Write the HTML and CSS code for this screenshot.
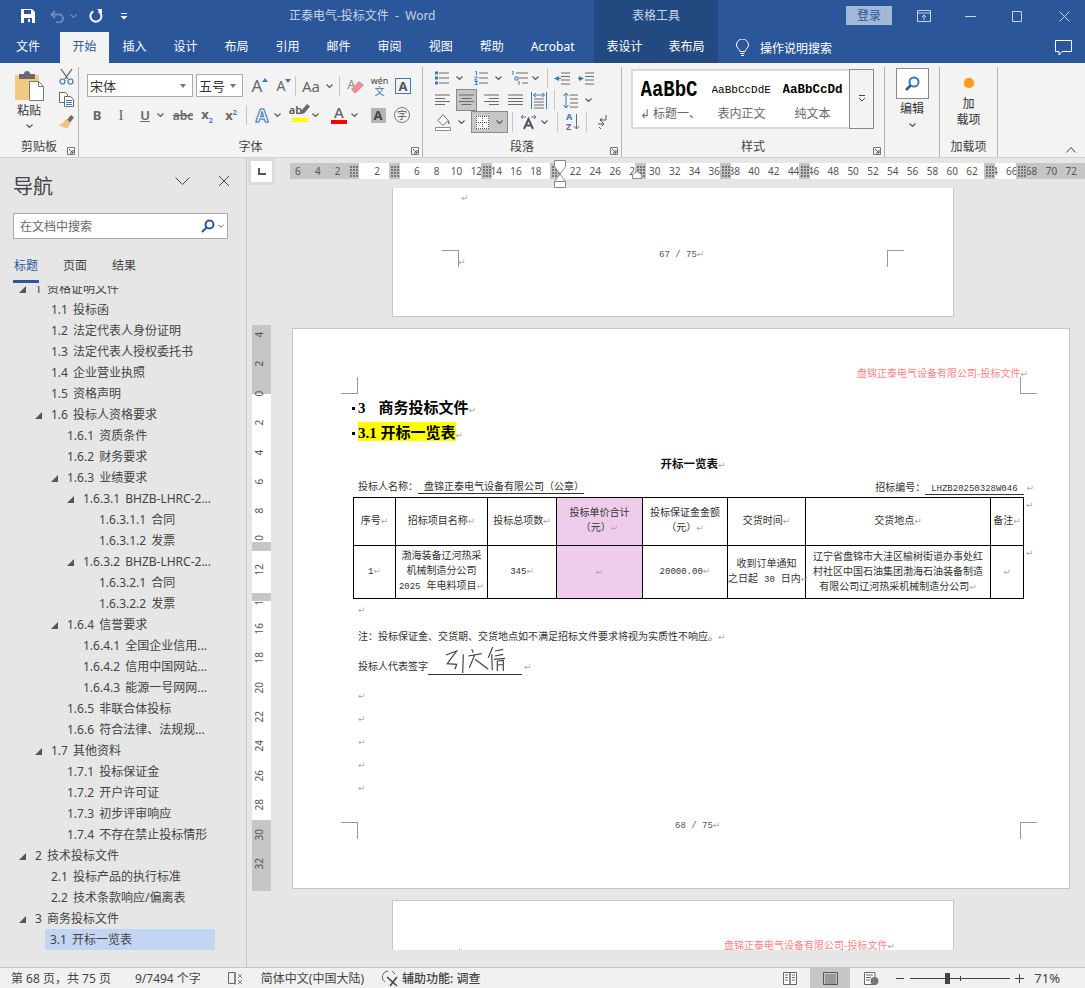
FILE: index.html
```html
<!DOCTYPE html>
<html lang="zh-CN">
<head>
 <meta charset="UTF-8">
 <title>正泰电气-投标文件 - Word</title>
 <link rel="stylesheet" href="styles.css">
</head>
<body>
 <svg class="defs" width="0" height="0">
  <symbol id="chev" viewBox="0 0 7 4"><path d="M.5.5 3.5 3.5 6.5.5" fill="none" stroke="currentColor" stroke-width="1.1"/></symbol>
  <symbol id="launch" viewBox="0 0 8 8"><path d="M.5 7.5V.5h7v7z" fill="none" stroke="#777"/><path d="M2 2l4 4M6 3v3H3" fill="none" stroke="#555"/></symbol>
  <symbol id="left" viewBox="0 0 15 12"><path d="M0 1h15M0 4.500h10M0 7.500h15M0 10.500h10" stroke="#6a6a6a"/></symbol>
  <symbol id="centerl" viewBox="0 0 15 12"><path d="M0 1h15M2.500 4.500h10M0 7.500h15M2.500 10.500h10" stroke="#6a6a6a"/></symbol>
  <symbol id="right" viewBox="0 0 15 12"><path d="M0 1h15M5 4.500h10M0 7.500h15M5 10.500h10" stroke="#6a6a6a"/></symbol>
  <symbol id="just" viewBox="0 0 15 12"><path d="M0 1h15M0 4.500h15M0 7.500h15M0 10.500h15" stroke="#6a6a6a"/></symbol>
 </svg>

 <header class="titlebar">
  <div class="qat">
   <svg class="q-save" width="14" height="14" viewBox="0 0 14 14"><path d="M0 0h11l3 3v11H0z" fill="#fff"/><path d="M3 1h7v4H3z" fill="#2b579a"/><path d="M3 9h8v5H3z" fill="#2b579a"/><path d="M7 10h2v3H7z" fill="#fff"/></svg>
   <svg class="q-undo" width="15" height="13" viewBox="0 0 15 13"><path d="M5 1 1.500 4.500 5 8" fill="none" stroke="#6d8cbc" stroke-width="2"/><path d="M2 4.500h7a4 4 0 0 1 0 8H6" fill="none" stroke="#6d8cbc" stroke-width="2"/></svg>
   <svg class="q-chev" width="7" height="4"><use href="#chev"/></svg>
   <svg class="q-redo" width="14" height="14" viewBox="0 0 14 14"><path d="M9.500 2.400a5.500 5.500 0 1 1-5.200 0" fill="none" stroke="#fff" stroke-width="2"/><path d="M8 0h5v5z" fill="#fff"/></svg>
   <svg class="q-more" width="8" height="7" viewBox="0 0 8 7"><path d="M1 .5h6" stroke="#fff"/><path d="M.5 3h7L4 6.500z" fill="#fff"/></svg>
  </div>
  <div class="doc-title">正泰电气-投标文件&nbsp;&nbsp;-&nbsp;&nbsp;Word</div>
  <div class="ctx-title">表格工具</div>
  <div class="win">
   <span class="login">登录</span>
   <svg class="w-opt" width="14" height="12" viewBox="0 0 14 12"><path d="M.5.5h13v11H.5zM.5 3h13M7 10V5M5 7l2-2 2 2" fill="none" stroke="#c9d5e8"/></svg>
   <svg class="w-min" width="11" height="11" viewBox="0 0 11 11"><path d="M0 5.500h11" stroke="#c9d5e8"/></svg>
   <svg class="w-max" width="10" height="11" viewBox="0 0 10 11"><path d="M.5.500h9v10h-9z" fill="none" stroke="#c9d5e8"/></svg>
   <svg class="w-close" width="11" height="11" viewBox="0 0 11 11"><path d="M.5.500l10 10M10.500.500l-10 10" stroke="#c9d5e8"/></svg>
  </div>
 </header>

 <nav class="tabs">
  <span class="tab tab-file">文件</span>
  <span class="tab tab-on">开始</span>
  <span class="tab">插入</span>
  <span class="tab">设计</span>
  <span class="tab">布局</span>
  <span class="tab">引用</span>
  <span class="tab">邮件</span>
  <span class="tab">审阅</span>
  <span class="tab">视图</span>
  <span class="tab">帮助</span>
  <span class="tab">Acrobat</span>
  <div class="ctx-tabs">
   <span class="tab tab-ctx">表设计</span>
   <span class="tab tab-ctx">表布局</span>
  </div>
  <svg class="bulb" width="13" height="18" viewBox="0 0 13 18"><path d="M4 12.500C3.500 10 .5 9 .5 6a6 6 0 0 1 12 0c0 3-3 4-3.500 6.500z" fill="none" stroke="#fff"/><path d="M4.500 14.500h4M5 16.500h3" stroke="#fff"/></svg>
  <span class="tell">操作说明搜索</span>
  <svg class="comment" width="17" height="16" viewBox="0 0 17 16"><path d="M.5.500h16v11H7l-3 3.500v-3.500H.5z" fill="none" stroke="#fff"/></svg>
 </nav>

 <section class="ribbon">
  <div class="group g-clip">
   <div class="clip-body">
    <div class="paste">
     <svg width="29" height="31" viewBox="0 0 29 31"><path d="M0 5h24v25H0z" fill="#f1c97f"/><path d="M4 4h5a3 3 0 0 1 6 0h5v5H4z" fill="#6a6a6a"/><path d="M14.500 11.500h9l5 5v14h-14z" fill="#fff" stroke="#777"/><path d="M23.500 11.500v5h5" fill="none" stroke="#777"/></svg>
     <span>粘贴</span>
     <svg class="chev" width="7" height="4"><use href="#chev"/></svg>
    </div>
    <div class="clip-small">
     <svg width="15" height="16" viewBox="0 0 15 16"><path d="M2 0l7 10M13 0 6 10" stroke="#666" stroke-width="1.300"/><circle cx="3.500" cy="12.500" r="2.500" fill="none" stroke="#3f78b8" stroke-width="1.200"/><circle cx="11.500" cy="12.500" r="2.500" fill="none" stroke="#3f78b8" stroke-width="1.200"/></svg>
     <svg width="15" height="15" viewBox="0 0 15 15"><path d="M.5.500h6l2 2v8h-8z" fill="#fff" stroke="#6a6a6a"/><path d="M5.500 4.500h6l3 3v7h-9z" fill="#fff" stroke="#6a6a6a"/><path d="M7 8.500h6M7 10.500h6M7 12.500h6" stroke="#3f78b8"/></svg>
     <svg width="17" height="15" viewBox="0 0 17 15"><path d="M9 6 13 1l3 2.500-4 5z" fill="#6a6a6a"/><path d="M8 5l5 4-4 5.500L0 11c3 0 5-2 8-6z" fill="#f0c380"/></svg>
    </div>
   </div>
   <div class="g-label">剪贴板<svg class="launch" width="8" height="8"><use href="#launch"/></svg></div>
  </div>

  <div class="group g-font">
   <div class="f-row f-top">
    <div class="select s-font"><span>宋体</span><i class="drop"></i></div>
    <div class="select s-size"><span>五号</span><i class="drop"></i></div>
    <span class="ib"><b class="glyph lg">A</b><i class="tri up"></i></span>
    <span class="ib"><b class="glyph md">A</b><i class="tri dn"></i></span>
    <i class="sep"></i>
    <span class="ib w39"><b class="glyph aa">Aa</b><svg class="chev" width="7" height="4"><use href="#chev"/></svg></span>
    <i class="sep"></i>
    <span class="ib ml2 eraser"><b class="glyph er">A</b><svg width="14" height="12" viewBox="0 0 14 12"><path d="M0 8 8 0l5 4-8 8H3z" fill="#ec8d9b"/></svg></span>
    <span class="ib wen"><small>wén</small><em>文</em></span>
    <span class="ib"><b class="glyph abox">A</b></span>
   </div>
   <div class="f-row f-btm">
    <span class="ib"><b class="glyph bd">B</b></span>
    <span class="ib"><i class="glyph it">I</i></span>
    <span class="ib"><u class="glyph un">U</u></span>
    <svg class="chev c-u" width="7" height="4"><use href="#chev"/></svg>
    <span class="ib"><s class="glyph st">abc</s></span>
    <span class="ib"><b class="glyph xs">x<sub>2</sub></b></span>
    <span class="ib"><b class="glyph xs">x<sup>2</sup></b></span>
    <i class="sep"></i>
    <span class="ib"><b class="glyph fx">A</b></span>
    <svg class="chev" width="7" height="4"><use href="#chev"/></svg>
    <span class="ib ml7 bar-ic"><span class="ab">ab<svg width="12" height="12" viewBox="0 0 12 12"><path d="M1 10l1-3 6-7 3 2.500-6 7z" fill="#6a6a6a"/></svg></span><i class="bar yel"></i></span>
    <svg class="chev" width="7" height="4"><use href="#chev"/></svg>
    <span class="ib ml8 bar-ic"><b class="glyph ac">A</b><i class="bar red"></i></span>
    <svg class="chev" width="7" height="4"><use href="#chev"/></svg>
    <span class="ib ml8"><b class="glyph shade">A</b></span>
    <span class="ib"><span class="circle">字</span></span>
   </div>
   <div class="g-label">字体<svg class="launch" width="8" height="8"><use href="#launch"/></svg></div>
  </div>

  <div class="group g-para">
   <div class="p-row">
    <svg class="li" width="14" height="14" viewBox="0 0 14 14"><path d="M4 2h10M4 7h10M4 12h10" stroke="#6a6a6a"/><path d="M0 .500h3v3H0zM0 5.500h3v3H0zM0 10.500h3v3H0z" fill="#3f78b8"/></svg>
    <svg class="chev" width="7" height="4"><use href="#chev"/></svg>
    <svg class="li ml11" width="14" height="14" viewBox="0 0 14 14"><path d="M5 2h9M5 7h9M5 12h9" stroke="#6a6a6a"/><path d="M1 0h1.500v4M.5 6h3L.5 9h3M.5 10.500h3l-1.500 1 1.500 2h-3" fill="none" stroke="#3f78b8"/></svg>
    <svg class="chev" width="7" height="4"><use href="#chev"/></svg>
    <svg class="li ml9" width="17" height="14" viewBox="0 0 17 14"><path d="M5 2h12M8 7h9M11 12h6" stroke="#6a6a6a"/><path d="M1 0h1v4M4 6h3v3H4zM8 10v4" fill="none" stroke="#3f78b8"/></svg>
    <svg class="chev c-tight" width="7" height="4"><use href="#chev"/></svg>
    <i class="sep ml8"></i>
    <svg class="li ml6" width="16" height="13" viewBox="0 0 16 13"><path d="M7 1h9M7 4.500h9M7 8h9M7 12h9" stroke="#6a6a6a"/><path d="M5 4v5L0 6.500z" fill="#3f78b8"/><path d="M3 6.500h4" stroke="#3f78b8"/></svg>
    <svg class="li ml8" width="16" height="13" viewBox="0 0 16 13"><path d="M7 1h9M7 4.500h9M7 8h9M7 12h9" stroke="#6a6a6a"/><path d="M1 4v5l5-2.500z" fill="#3f78b8"/><path d="M0 6.500h3" stroke="#3f78b8"/></svg>
   </div>
   <div class="p-row">
    <svg class="li" width="15" height="12"><use href="#left"/></svg>
    <span class="on on-c ml6"><svg width="15" height="12"><use href="#centerl"/></svg></span>
    <svg class="li ml7" width="15" height="12"><use href="#right"/></svg>
    <svg class="li ml9" width="15" height="12"><use href="#just"/></svg>
    <svg class="li ml8" width="16" height="17" viewBox="0 0 16 17"><path d="M.5 0v17M15.500 0v17" stroke="#3f78b8"/><path d="M3 7h10M3 10h10M3 13h10M3 16h10" stroke="#6a6a6a"/><path d="M2.500 3h11M5 1 2.500 3 5 5M11 1l2.500 2L11 5" fill="none" stroke="#3f78b8"/></svg>
    <i class="sep ml7"></i>
    <svg class="li ml8" width="15" height="17" viewBox="0 0 15 17"><path d="M7 3h8M7 7h8M7 11h8M7 15h8" stroke="#6a6a6a"/><path d="M3 1v15M.5 4 3 1l2.500 3M.5 13 3 16l2.500-3" fill="none" stroke="#3f78b8"/></svg>
    <svg class="chev" width="7" height="4"><use href="#chev"/></svg>
   </div>
   <div class="p-row">
    <svg class="li" width="16" height="17" viewBox="0 0 16 17"><path d="M8 .500l5 6-5 5-5-5z" fill="#fff" stroke="#6a6a6a"/><path d="M13 6c2 2 2 4 1 4s-1.500-2-1-4z" fill="#3f78b8"/><path d="M.5 13.500h15v3H.5z" fill="#fff" stroke="#8a8a8a"/></svg>
    <svg class="chev" width="7" height="4"><use href="#chev"/></svg>
    <span class="on on-b ml6"><svg width="13" height="13" viewBox="0 0 13 13"><path d="M0 0h13v13H0z" fill="#fff"/><path d="M.5 0v13M6.500 0v13M12.500 0v13M0 .500h13M0 6.500h13M0 12.500h13" stroke="#555" stroke-dasharray="1 1"/></svg><svg class="chev" width="7" height="4"><use href="#chev"/></svg></span>
    <i class="sep ml4"></i>
    <svg class="li ml7" width="17" height="15" viewBox="0 0 17 15"><path d="M4 14 8.500 4 13 14M6 10.500h5" fill="none" stroke="#555" stroke-width="2"/><path d="M6 2H1M3 0 1 2l2 2M11 2h5M14 0l2 2-2 2" fill="none" stroke="#3f78b8"/></svg>
    <svg class="chev c-tight" width="7" height="4"><use href="#chev"/></svg>
    <i class="sep ml9"></i>
    <span class="sort ml8"><b>A</b><b>Z</b></span>
    <svg class="sort-arrow" width="7" height="16" viewBox="0 0 7 16"><path d="M3.500 0v15M.5 12l3 3 3-3" fill="none" stroke="#6a6a6a"/></svg>
    <i class="sep ml6"></i>
    <svg class="li ml10" width="10" height="14" viewBox="0 0 10 14"><path d="M9 0v5H3M5 3 3 5l2 2" fill="none" stroke="#555"/><path d="M1 9h6M5 7l2 2-2 2M2 12l2 2" fill="none" stroke="#555"/></svg>
   </div>
   <div class="g-label">段落<svg class="launch" width="8" height="8"><use href="#launch"/></svg></div>
  </div>

  <div class="group g-style">
   <div class="gallery">
    <div class="samples">
     <div class="sample s1"><b>AaBbC</b><span>↲ 标题一、</span></div>
     <div class="sample s2"><b>AaBbCcDdE</b><span>表内正文</span></div>
     <div class="sample s3"><b>AaBbCcDdE</b><span>纯文本</span></div>
    </div>
    <div class="g-more"><svg width="8" height="8" viewBox="0 0 8 8"><path d="M1 .5h6" stroke="#444"/><path d="M1 3l3 3 3-3" fill="none" stroke="#444"/></svg></div>
   </div>
   <div class="g-label">样式<svg class="launch" width="8" height="8"><use href="#launch"/></svg></div>
  </div>

  <div class="group g-edit">
   <div class="find"><svg width="18" height="18" viewBox="0 0 18 18"><circle cx="11" cy="7" r="4.500" fill="none" stroke="#3f78b8" stroke-width="2"/><path d="M7.500 10.500 3 15" stroke="#2b579a" stroke-width="2.500"/></svg></div>
   <span>编辑</span>
   <svg class="chev" width="7" height="4"><use href="#chev"/></svg>
  </div>

  <div class="group g-addin">
   <i class="dot"></i>
   <span class="add-text">加<br>载项</span>
   <div class="g-label">加载项</div>
  </div>

  <svg class="collapse" width="10" height="6" viewBox="0 0 10 6"><path d="M.5 5.500l4.500-5 4.500 5" fill="none" stroke="#444"/></svg>
 </section>

 <main class="workspace">
  <aside class="navpane">
   <div class="nav-head">
    <h2>导航</h2>
    <svg class="nav-v" width="15" height="8" viewBox="0 0 15 8"><path d="M.5.500l7 7 7-7" fill="none" stroke="#444"/></svg>
    <svg class="nav-x" width="10" height="10" viewBox="0 0 10 10"><path d="M0 0l10 10M10 0 0 10" stroke="#444"/></svg>
   </div>
   <div class="nav-search">
    <span>在文档中搜索</span>
    <svg width="14" height="14" viewBox="0 0 14 14"><circle cx="8.500" cy="5.500" r="4" fill="none" stroke="#2b579a" stroke-width="2"/><path d="M5.500 8.500 1 13" stroke="#2b579a" stroke-width="2"/></svg>
    <svg class="chev" width="6" height="4"><use href="#chev"/></svg>
   </div>
   <div class="nav-tabs">
    <span class="nav-tab nav-on">标题</span>
    <span class="nav-tab">页面</span>
    <span class="nav-tab">结果</span>
   </div>
   <ul class="tree">
    <li class="l0 open">1 资格证明文件</li>
    <li class="l1">1.1 投标函</li>
    <li class="l1">1.2 法定代表人身份证明</li>
    <li class="l1">1.3 法定代表人授权委托书</li>
    <li class="l1">1.4 企业营业执照</li>
    <li class="l1">1.5 资格声明</li>
    <li class="l1 open">1.6 投标人资格要求</li>
    <li class="l2">1.6.1 资质条件</li>
    <li class="l2">1.6.2 财务要求</li>
    <li class="l2 open">1.6.3 业绩要求</li>
    <li class="l3 open">1.6.3.1 BHZB-LHRC-2...</li>
    <li class="l4">1.6.3.1.1 合同</li>
    <li class="l4">1.6.3.1.2 发票</li>
    <li class="l3 open">1.6.3.2 BHZB-LHRC-2...</li>
    <li class="l4">1.6.3.2.1 合同</li>
    <li class="l4">1.6.3.2.2 发票</li>
    <li class="l2 open">1.6.4 信誉要求</li>
    <li class="l3">1.6.4.1 全国企业信用...</li>
    <li class="l3">1.6.4.2 信用中国网站...</li>
    <li class="l3">1.6.4.3 能源一号网网...</li>
    <li class="l2">1.6.5 非联合体投标</li>
    <li class="l2">1.6.6 符合法律、法规规...</li>
    <li class="l1 open">1.7 其他资料</li>
    <li class="l2">1.7.1 投标保证金</li>
    <li class="l2">1.7.2 开户许可证</li>
    <li class="l2">1.7.3 初步评审响应</li>
    <li class="l2">1.7.4 不存在禁止投标情形</li>
    <li class="l0 open">2 技术投标文件</li>
    <li class="l1">2.1 投标产品的执行标准</li>
    <li class="l1">2.2 技术条款响应/偏离表</li>
    <li class="l0 open">3 商务投标文件</li>
    <li class="l1 current">3.1 开标一览表</li>
   </ul>
  </aside>

  <div class="docwrap">
   <div class="ruler-row">
    <div class="tab-stop"><svg width="8" height="7" viewBox="0 0 8 7"><path d="M1 0v6h7" fill="none" stroke="#555" stroke-width="2"/></svg></div>
    <div class="hruler">
     <span>6</span><span>4</span><span>2</span><span></span><span>2</span><span></span><span>6</span><span>8</span><span>10</span><span>12</span><span>14</span><span>16</span><span>18</span><span></span><span>22</span><span>24</span><span>26</span><span>28</span><span>30</span><span>32</span><span>34</span><span>36</span><span>38</span><span>40</span><span>42</span><span>44</span><span>46</span><span>48</span><span>50</span><span>52</span><span>54</span><span>56</span><span>58</span><span>60</span><span>62</span><span>64</span><span>66</span><span>68</span><span>70</span><span>72</span>
     <i class="hatch h1"></i><i class="hatch h2"></i><i class="hatch h3"></i><i class="hatch h4"></i><i class="hatch h5"></i><i class="hatch h6"></i><i class="hatch h7"></i><i class="hatch h8"></i><i class="hatch h9"></i>
     <svg class="indent" width="14" height="28" viewBox="0 0 14 28"><path d="M1.500.5h11v6L7 14l5.500 7.500v6h-11v-6L7 14 1.500 6.500zM1.500 21.500h11" fill="#fff" stroke="#888"/></svg>
     <svg class="tabmark" width="10" height="8" viewBox="0 0 10 8"><path d="M.5 7.500V3.500L5 .5l4.500 3v4z" fill="#fff" stroke="#888"/></svg>
    </div>
   </div>
   <div class="docbody">
    <div class="vruler">
     <span>4</span><span>2</span><span>0</span><span>2</span><span>4</span><span>6</span><span>8</span><span>10</span><span>12</span><span>14</span><span>16</span><span>18</span><span>20</span><span>22</span><span>24</span><span>26</span><span>28</span><span>30</span><span>32</span>
     <i class="vbar v1"></i><i class="vbar v2"></i>
    </div>
    <div class="pages">
     <div class="page page-a">
      <p class="ret-line ret-top"><span class="r">↵</span></p>
      <div class="crop c-left-a"></div>
      <div class="crop c-right-a"></div>
      <p class="ret-line ret-mark"><span class="r">↵</span></p>
      <p class="pageno pageno-a">67 / 75<span class="r">↵</span></p>
     </div>

     <div class="page page-b">
      <div class="crop c-tl"></div>
      <div class="crop c-tr"></div>
      <div class="crop c-bl"></div>
      <div class="crop c-br"></div>
      <p class="doc-header">盘锦正泰电气设备有限公司-投标文件<span class="r">↵</span></p>
      <h3 class="h-one"><span class="en-h">3</span>商务投标文件<span class="r">↵</span></h3>
      <h3 class="h-two"><span class="mark"><span class="en-h">3.1 </span>开标一览表</span><span class="r">↵</span></h3>
      <p class="tbl-title">开标一览表<span class="r">↵</span></p>
      <div class="bidder">
       <span>投标人名称：<span class="ul">&nbsp;盘锦正泰电气设备有限公司（公章）</span></span>
       <span>招标编号：<span class="ul">&nbsp;<span class="en">LHZB20250328W046</span>&nbsp;</span><span class="r">&nbsp;↵</span></span>
      </div>
      <table class="bid">
       <colgroup><col class="c1"><col class="c2"><col class="c3"><col class="c4"><col class="c5"><col class="c6"><col class="c7"><col class="c8"><col class="c9"></colgroup>
       <tr class="r-head">
        <td>序号<span class="r">↵</span></td>
        <td>招标项目名称<span class="r">↵</span></td>
        <td>投标总项数<span class="r">↵</span></td>
        <td class="pink">投标单价合计<br>（元）<span class="r">↵</span></td>
        <td>投标保证金金额<br>（元）<span class="r">↵</span></td>
        <td>交货时间<span class="r">↵</span></td>
        <td>交货地点<span class="r">↵</span></td>
        <td>备注<span class="r">↵</span></td>
        <td class="row-end"><span class="r">↵</span></td>
       </tr>
       <tr class="r-data">
        <td><span class="en">1</span><span class="r">↵</span></td>
        <td>渤海装备辽河热采<br>机械制造分公司<br><span class="en">2025</span> 年电料项目<span class="r">↵</span></td>
        <td><span class="en">345</span><span class="r">↵</span></td>
        <td class="pink"><span class="r">↵</span></td>
        <td><span class="en">20000.00</span><span class="r">↵</span></td>
        <td>收到订单通知<br>之日起 <span class="en">30</span> 日内<span class="r">↵</span></td>
        <td>辽宁省盘锦市大洼区榆树街道办事处红<br>村社区中国石油集团渤海石油装备制造<br>有限公司辽河热采机械制造分公司<span class="r">↵</span></td>
        <td><span class="r">↵</span></td>
        <td class="row-end"><span class="r">↵</span></td>
       </tr>
      </table>
      <p class="blank b-first"><span class="r">↵</span></p>
      <p class="note">注：投标保证金、交货期、交货地点如不满足招标文件要求将视为实质性不响应。<span class="r">↵</span></p>
      <p class="sign">投标人代表签字<span class="sign-line"></span><span class="r">↵</span>
       <svg class="signature" width="66" height="32" viewBox="0 0 66 32"><path d="M2 9 12.700 5 7.700 11.700 3.300 17.700 12.700 18.300 11 23.300M19.300 8.300 18.700 27M27.700 3.300 29.300 6.700M24.300 10 37.700 7.700M31 8.300 25.300 21.700M31 13.300 44.300 23.300M48.700 1 44.300 11.700M47.700 8.300 48.300 24.300M51 5 59.300 3.300M51 10 59.300 8.300M50 13.300 61 12.300M53.300 15V25M53.300 15 59.300 14.300V25M53.300 19 59.300 18.500" fill="none" stroke="#444" stroke-width="1.200"/></svg>
      </p>
      <p class="blank b-next1"><span class="r">↵</span></p>
      <p class="blank"><span class="r">↵</span></p>
      <p class="blank"><span class="r">↵</span></p>
      <p class="blank"><span class="r">↵</span></p>
      <p class="blank"><span class="r">↵</span></p>
      <p class="pageno pageno-b">68 / 75<span class="r">↵</span></p>
     </div>

     <div class="page page-c">
      <p class="doc-header header-c">盘锦正泰电气设备有限公司-投标文件<span class="r">↵</span></p>
      <i class="tick"></i>
     </div>
    </div>
   </div>
  </div>
 </main>

 <footer class="statusbar">
  <span class="st-page">第 68 页，共 75 页</span>
  <span class="st-words">9/7494 个字</span>
  <svg class="st-book" width="15" height="13" viewBox="0 0 15 13"><path d="M7 .5H.5v11H7zM7 .5v12" fill="none" stroke="#666"/><path d="M10 2l4 4M14 2l-4 4M10 8l4 4M14 8l-4 4" stroke="#666" stroke-width=".8"/></svg>
  <span class="st-lang">简体中文(中国大陆)</span>
  <svg class="st-acc" width="18" height="17" viewBox="0 0 18 17"><path d="M6 1a6 6 0 0 0-3 11" fill="none" stroke="#666"/><path d="M5 7l10 9M15 7 8 16" stroke="#444" stroke-width="1.600"/><path d="M10 1l3 3" stroke="#666"/></svg>
  <span class="st-acc-text">辅助功能: 调查</span>
  <div class="st-right">
   <svg class="view-read" width="14" height="13" viewBox="0 0 14 13"><path d="M.5.5H7v12H.5zM7 .5h6.500v12H7z" fill="#fff" stroke="#666"/><path d="M2 3h3M2 5.500h3M2 8h3M9 3h3M9 5.500h3M9 8h3" stroke="#666"/></svg>
   <span class="view-on"><svg width="15" height="13" viewBox="0 0 15 13"><path d="M.5.500h14v12H.5z" fill="none" stroke="#555"/><path d="M2 3h11M2 5h11M2 7h11M2 9h11M2 11h11" stroke="#555" stroke-width=".8"/></svg></span>
   <svg class="view-web" width="15" height="13" viewBox="0 0 15 13"><path d="M.5.500H11v12H.5z" fill="#fff" stroke="#666"/><path d="M2 3h7M2 5.500h5M2 8h4" stroke="#666"/><circle cx="10.500" cy="9" r="4" fill="#777"/></svg>
   <i class="zoom-minus"></i>
   <div class="slider"><i class="thumb"></i><i class="mid"></i></div>
   <svg class="zoom-plus" width="9" height="9" viewBox="0 0 9 9"><path d="M0 4.500h9M4.500 0v9" stroke="#444"/></svg>
   <span class="st-zoom">71%</span>
  </div>
 </footer>
</body>
</html>
```

FILE: styles.css
```css
* {
margin: 0;
padding: 0;
box-sizing: border-box;
}

body {
width: 1085px;
height: 988px;
overflow: hidden;
background: #e6e6e6;
color: #444;
font-family: "Noto Sans", "Noto Sans CJK SC", sans-serif;
font-size: 12px;
}

i, em { font-style: normal; }

.defs { position: absolute; }

/* title bar */
.titlebar {
display: flex;
height: 32px;
background: #2b579a;
color: #c9d5e8;
}

.qat {
display: flex;
align-items: center;
width: 289px;
padding-left: 21px;
color: #6d8cbc;
}

.q-undo { margin-left: 15px; }
.q-chev { margin-left: 5px; }
.q-redo { margin-left: 12px; }
.q-more { margin-left: 17px; }

.doc-title {
width: 305px;
line-height: 31px;
}

.ctx-title {
width: 124px;
background: #234a80;
text-align: center;
line-height: 31px;
}

.win {
display: flex;
align-items: center;
flex: 1;
padding-left: 128px;
}

.login {
width: 46px;
height: 19px;
margin-top: -1px;
background: #a3b8d6;
color: #2b579a;
text-align: center;
line-height: 19px;
}

.w-opt { margin-left: 25px; }
.w-min { margin-left: 34px; }
.w-max { margin-left: 36px; }
.w-close { margin-left: 37px; }

/* tabs */
.tabs {
display: flex;
align-items: center;
height: 31px;
background: #2b579a;
color: #fff;
}

.tab {
height: 31px;
padding: 0 13.5px;
line-height: 29px;
}

.tab-file {
padding: 0 20px 0 16px;
}

.tab-on {
padding: 0 12.5px;
background: #f3f3f3;
color: #2b579a;
}

.ctx-tabs {
display: flex;
margin-left: 6px;
background: #234a80;
}

.tab-ctx {
padding: 0 12.5px;
}

.tab-ctx + .tab-ctx {
padding: 0 13.5px;
}

.bulb { margin-left: 18px; }

.tell { margin-left: 11px; }

.comment { margin-left: 223px; }

/* ribbon */
.ribbon {
position: relative;
display: flex;
height: 95px;
background: #f3f3f3;
border-bottom: 1px solid #d2d2d2;
}

.group {
position: relative;
height: 90px;
margin-top: 4px;
border-right: 1px solid #b4b4b4;
}

.g-label {
position: absolute;
left: 0;
right: 0;
bottom: 2px;
text-align: center;
line-height: 16px;
color: #444;
}

.launch {
position: absolute;
right: 3px;
bottom: 0;
}

.chev {
flex: none;
color: #555;
}

.sep {
flex: none;
width: 1px;
height: 20px;
background: #c6c6c6;
}

.g-clip { width: 79px; }

.clip-body { display: flex; }

.paste {
display: flex;
flex-direction: column;
align-items: center;
width: 58px;
padding-top: 3px;
line-height: 16px;
color: #333;
}

.paste span { margin-top: 2px; }

.paste .chev { margin-top: 5px; }

.clip-small {
display: flex;
flex-direction: column;
align-items: center;
gap: 7px;
width: 16px;
padding-top: 2px;
}

.g-font { width: 344px; }

.f-row {
display: flex;
align-items: center;
}

.f-top {
height: 23px;
margin-top: 7px;
padding-left: 8px;
}

.f-btm {
height: 24px;
margin-top: 6px;
padding-left: 6px;
}

.select {
display: flex;
align-items: center;
justify-content: space-between;
height: 23px;
padding: 0 6px 0 2px;
background: #fff;
border: 1px solid #ababab;
font-family: "Noto Sans CJK SC", sans-serif;
font-size: 13px;
color: #333;
}

.s-font { width: 106px; }

.s-size {
width: 47px;
margin: 0 2px 0 3px;
}

.drop {
border: 3px solid transparent;
border-top: 4px solid #777;
border-bottom: 0;
}

.ib {
position: relative;
display: flex;
align-items: center;
justify-content: center;
flex: none;
width: 24px;
height: 22px;
}

.w39 {
width: 39px;
gap: 6px;
}

.ml2 { margin-left: 2px; }
.ml4 { margin-left: 4px; }
.ml6 { margin-left: 6px; }
.ml7 { margin-left: 7px; }
.ml8 { margin-left: 8px; }
.ml9 { margin-left: 9px; }
.ml10 { margin-left: 10px; }
.ml11 { margin-left: 11px; }

.f-top .sep { margin: 0 2px; }

.f-btm .sep { margin: 0 3px; }

.f-btm .chev { margin-left: 0; }

.c-u { margin: 0 7px 0 3px; }

.glyph {
font-family: "Noto Sans", sans-serif;
color: #666;
text-decoration-thickness: 1px;
}

.lg { font-size: 17px; font-weight: 400; }
.md { font-size: 14px; font-weight: 400; }
.aa { font-size: 15px; font-weight: 400; }

.er {
margin: -3px 0 0 -9px;
font-size: 13px;
font-weight: 400;
color: #8a8a8a;
}

.eraser svg {
position: absolute;
left: 7px;
top: 6px;
}

.tri {
position: absolute;
border: 3px solid transparent;
}

.tri.up {
top: 3px;
right: 1px;
border-top: 0;
border-bottom: 4px solid #3f78b8;
}

.tri.dn {
top: 4px;
right: 2px;
border-bottom: 0;
border-top: 4px solid #3f78b8;
}

.wen {
flex-direction: column;
width: 23px;
}

.wen small {
height: 11px;
font-size: 9px;
line-height: 11px;
color: #444;
}

.wen em {
height: 11px;
font-size: 10px;
line-height: 11px;
color: #3f78b8;
}

.abox {
width: 16px;
height: 16px;
border: 1px solid #3f78b8;
font-size: 13px;
text-align: center;
line-height: 14px;
color: #555;
}

.bd { font-size: 13px; }

.it {
font-family: "Liberation Serif", serif;
font-size: 15px;
}

.un {
font-size: 13px;
font-weight: 600;
}

.st {
font-size: 12px;
font-weight: 600;
}

.xs {
font-size: 13px;
}

.xs sub, .xs sup {
font-size: 7px;
color: #3f78b8;
}

.fx {
font-size: 18px;
color: #fff;
-webkit-text-stroke: 1px #3f78b8;
text-shadow: 0 0 3px #a9c4e6;
}

.bar-ic {
flex-direction: column;
justify-content: flex-start;
height: 22px;
}

.ab {
display: flex;
height: 14px;
font-size: 11px;
font-weight: 600;
line-height: 12px;
color: #555;
}

.ab svg { margin-left: -3px; }

.bar {
width: 16px;
height: 4px;
}

.yel { background: #ffff00; }
.red { background: #ff0000; }

.ac {
height: 16px;
font-size: 15px;
font-weight: 500;
line-height: 16px;
}

.shade {
width: 15px;
height: 15px;
background: #b5b5b5;
font-size: 13px;
text-align: center;
line-height: 15px;
color: #444;
}

.circle {
width: 16px;
height: 16px;
border: 1px solid #777;
border-radius: 50%;
font-size: 10px;
text-align: center;
line-height: 14px;
color: #555;
}

.g-para {
width: 199px;
padding: 0 0 0 12px;
}

.p-row {
display: flex;
align-items: center;
height: 22px;
}

.p-row .chev { margin-left: 7px; }
.p-row .c-tight { margin-left: 4px; }

.p-row .sep { height: 20px; }

.li { flex: none; }

.on {
display: flex;
align-items: center;
justify-content: center;
flex: none;
background: #c6c6c6;
border: 1px solid #8a8a8a;
height: 22px;
}

.on-c { width: 21px; }

.on-b {
width: 37px;
gap: 7px;
}

.p-row .on-b .chev { margin-left: 0; }

.sort {
display: flex;
flex-direction: column;
font-size: 9px;
line-height: 10px;
color: #3f78b8;
}

.sort b + b { color: #8a55a8; }

.sort-arrow { margin-left: 1px; }

.g-style { width: 263px; }

.gallery {
display: flex;
height: 60px;
margin: 2px 0 0 9px;
width: 243px;
border: 2px solid #d8d8d8;
background: #fff;
}

.samples {
display: flex;
flex: 1;
padding-left: 2px;
}

.sample {
display: flex;
flex-direction: column;
align-items: center;
width: 71px;
overflow: hidden;
white-space: nowrap;
}

.sample b {
display: block;
height: 35px;
width: 60px;
overflow: hidden;
font-family: "Liberation Mono", monospace;
color: #000;
text-align: left;
}

.s1 b {
padding-top: 4px;
font-size: 19px;
line-height: 30px;
transform: scaleY(1.15);
}

.s2 b {
font-size: 11px;
font-weight: 400;
line-height: 38px;
}

.s3 b {
font-size: 12.5px;
line-height: 38px;
}

.sample span {
color: #666;
line-height: 16px;
}

.g-more {
display: flex;
align-items: center;
justify-content: center;
width: 25px;
margin: -2px -2px -2px 0;
background: #f3f3f3;
border: 1px solid #8a8a8a;
}

.g-edit {
display: flex;
flex-direction: column;
align-items: center;
width: 55px;
padding-top: 1px;
color: #333;
}

.find {
display: flex;
align-items: center;
justify-content: center;
width: 33px;
height: 31px;
background: #fff;
border: 1px solid #8a8a8a;
}

.g-edit span {
margin-top: 2px;
line-height: 16px;
}

.g-edit .chev { margin-top: 6px; }

.g-addin {
display: flex;
flex-direction: column;
align-items: center;
width: 58px;
padding-top: 11px;
}

.dot {
width: 10px;
height: 10px;
border-radius: 50%;
background: #ff9a1a;
box-shadow: 0 0 2px #ffc46c;
}

.add-text {
margin-top: 8px;
text-align: center;
line-height: 16px;
color: #333;
}

.collapse {
position: absolute;
right: 9px;
bottom: 4px;
}

/* main area */
.workspace {
display: flex;
height: 809px;
}

.navpane {
flex: none;
width: 247px;
overflow: hidden;
border-right: 1px solid #c6c6c6;
}

.nav-head {
display: flex;
align-items: center;
height: 55px;
padding: 0 0 9px 13px;
}

.nav-head h2 {
margin-top: 8px;
font-size: 20px;
font-weight: 400;
width: 162px;
color: #444;
}

.nav-x { margin-left: 29px; }

.nav-search {
display: flex;
align-items: center;
width: 215px;
height: 26px;
margin-left: 13px;
padding: 0 3px 0 6px;
background: #fff;
border: 1px solid #ababab;
color: #666;
}

.nav-search span { flex: 1; }

.nav-search .chev { margin-left: 3px; }

.nav-tabs {
display: flex;
gap: 25px;
height: 29px;
margin: 15px 0 0 14px;
line-height: 24px;
}

.nav-tab {
position: relative;
}

.nav-on {
color: #2b579a;
}

.nav-on::after {
content: "";
position: absolute;
left: -1px;
right: -1px;
bottom: 0;
height: 3px;
background: #2b579a;
}

.tree {
height: 664px;
margin-top: 3px;
overflow: hidden;
list-style: none;
}

.tree li {
height: 21px;
line-height: 21px;
white-space: nowrap;
word-spacing: 2px;
color: #444;
}

.tree li:first-child { margin-top: -8px; }

.l0 { padding-left: 35px; }
.l1 { padding-left: 51px; }
.l2 { padding-left: 67px; }
.l3 { padding-left: 83px; }
.l4 { padding-left: 99px; }

.open::before {
content: "";
display: inline-block;
width: 7px;
height: 7px;
margin: 0 9px 0 -16px;
background: #555;
clip-path: polygon(100% 0, 100% 100%, 0 100%);
}

.tree .current {
width: 170px;
margin-left: 45px;
padding-left: 5px;
background: #c2d5f2;
}

.docwrap {
flex: 1;
overflow: hidden;
}

.ruler-row {
position: relative;
display: flex;
height: 30px;
}

.tab-stop {
display: flex;
align-items: center;
justify-content: center;
flex: none;
width: 21px;
height: 21px;
margin: 3px 0 0 4px;
background: #fff;
box-shadow: 0 0 0 3px #dcdcdc;
}

.hruler {
position: relative;
display: flex;
width: 795px;
height: 16px;
margin: 5px 0 0 18px;
background: linear-gradient(90deg, #c6c6c6 68px, #fff 68px, #fff 726px, #c6c6c6 726px);
font-size: 10px;
line-height: 16px;
color: #555;
}

.hruler span {
flex: none;
width: 19.83px;
text-align: center;
}

.hruler span:first-child { margin-left: -2px; }

.hatch {
position: absolute;
top: 0;
width: 11px;
height: 16px;
border-style: solid;
border-color: #c6c6c6;
border-width: 2px 1px;
background-color: #777;
background-clip: padding-box;
background-image: linear-gradient(#c0c0c0 1px, transparent 1px), linear-gradient(90deg, #c0c0c0 1px, transparent 1px);
background-size: 3px 3px;
}

.h1 { left: 58px; }
.h2 { left: 99px; }
.h3 { left: 191px; }
.h4 { left: 260px; }
.h5 { left: 345px; }
.h6 { left: 430px; }
.h7 { left: 509px; }
.h8 { left: 694px; }
.h9 { left: 726px; }

.indent {
position: absolute;
top: 0;
left: 263px;
margin-top: -3px;
z-index: 2;
}

.tabmark {
position: absolute;
left: 342px;
bottom: 0;
z-index: 2;
}

.docbody {
display: flex;
height: 762px;
overflow: hidden;
}

.vruler {
position: relative;
flex: none;
width: 19px;
height: 566px;
margin: 137px 0 0 5px;
overflow: hidden;
background: linear-gradient(180deg, #c6c6c6 69px, #fff 69px, #fff 495px, #c6c6c6 495px);
font-size: 10px;
color: #555;
}

.vruler span {
display: flex;
align-items: center;
justify-content: center;
height: 29.4px;
writing-mode: vertical-rl;
transform: rotate(180deg);
}

.vruler span:first-child { margin-top: -5px; }

.vbar {
position: absolute;
left: 0;
width: 19px;
background: #c6c6c6;
}

.v1 { top: 217px; height: 9px; }
.v2 { top: 268px; height: 8px; }

.pages {
flex: 1;
font-family: "Liberation Mono", "Noto Sans CJK SC", monospace;
font-size: 10px;
color: #333;
}

.page {
position: relative;
background: #fff;
border: 1px solid #c6c6c6;
}

.page p { white-space: nowrap; }

.page-a {
width: 562px;
height: 129px;
margin-left: 121px;
border-top: 0;
}

.page-b {
width: 778px;
height: 561px;
margin: 11px 0 0 21px;
padding-left: 65px;
}

.page-c {
width: 562px;
height: 80px;
margin: 11px 0 0 121px;
}

.r {
font-family: "DejaVu Sans", sans-serif;
font-size: 9px;
font-weight: 400;
color: #aaa;
}

.ret-line { line-height: 12px; }

.ret-top {
padding: 4px 0 0 68px;
}

.ret-mark {
position: absolute;
top: 68px;
left: 65px;
}

.pageno {
font-size: 9px;
text-align: center;
color: #555;
}

.pageno-a {
position: absolute;
top: 59px;
left: 266px;
line-height: 14px;
}

.pageno-b {
position: absolute;
top: 489px;
left: 382px;
line-height: 14px;
}

.crop {
position: absolute;
width: 17px;
height: 17px;
}

.c-left-a {
top: 62px;
left: 49px;
border-right: 1px solid #999;
border-top: 1px solid #999;
}

.c-right-a {
top: 62px;
left: 494px;
border-left: 1px solid #999;
border-top: 1px solid #999;
}

.c-tl {
top: 48px;
left: 48px;
border-right: 1px solid #999;
border-bottom: 1px solid #999;
}

.c-tr {
top: 48px;
left: 727px;
border-left: 1px solid #999;
border-bottom: 1px solid #999;
}

.c-bl {
top: 493px;
left: 48px;
border-right: 1px solid #999;
border-top: 1px solid #999;
}

.c-br {
top: 493px;
left: 727px;
border-left: 1px solid #999;
border-top: 1px solid #999;
}

.doc-header {
padding: 37px 41px 0 0;
text-align: right;
line-height: 14px;
font-family: "Noto Sans CJK SC", sans-serif;
color: #ff8585;
}

.doc-header.header-c {
padding: 38px 58px 0 0;
line-height: 11px;
}

.h-one, .h-two {
height: 20px;
line-height: 20px;
font-family: "Noto Sans CJK SC", sans-serif;
font-size: 15px;
font-weight: 700;
color: #000;
white-space: nowrap;
}

.h-one { margin-top: 16px; }
.h-two { margin-top: 5px; }

.h-one::before, .h-two::before {
content: "";
display: inline-block;
width: 3px;
height: 3px;
margin: 0 3px 3px -6px;
background: #000;
}

.en-h {
font-family: "Liberation Serif", serif;
}

.h-one .en-h { margin-right: 13px; }

.mark {
display: inline-block;
height: 19px;
background: #ffff00;
line-height: 19px;
}

.tbl-title {
margin-top: 13px;
text-align: center;
padding-right: 41px;
line-height: 16px;
font-family: "Noto Sans CJK SC", sans-serif;
font-size: 11.5px;
font-weight: 700;
color: #111;
}

.bidder {
display: flex;
justify-content: space-between;
width: 676px;
height: 14px;
margin-top: 8px;
line-height: 14px;
white-space: nowrap;
}

.ul {
border-bottom: 1px solid #333;
}

.en {
font-size: 9px;
}

.bid {
table-layout: fixed;
width: 685px;
margin: 2px 0 0 -5px;
border-collapse: collapse;
text-align: center;
white-space: nowrap;
}

.bid td {
padding: 0;
border: 1px solid #000;
}

.bid .row-end {
border: 0;
font-size: 9px;
vertical-align: top;
text-align: left;
padding-left: 2px;
}

.c1 { width: 42px; }
.c2 { width: 92px; }
.c3 { width: 69px; }
.c4 { width: 86px; }
.c5 { width: 85px; }
.c6 { width: 78px; }
.c7 { width: 185px; }
.c8 { width: 33px; }
.c9 { width: 15px; }

.r-head td {
height: 48px;
line-height: 14px;
}

.r-data td {
height: 53px;
line-height: 15px;
}

.bid .pink { background: #efcdea; }

.blank {
height: 12px;
margin-top: 11px;
line-height: 12px;
}

.blank.b-first { margin-top: 5px; }

.blank.b-next1 { margin-top: 16px; }

.note {
height: 14px;
margin-top: 14px;
line-height: 14px;
}

.sign {
position: relative;
height: 14px;
margin-top: 16px;
line-height: 14px;
}

.sign-line {
display: inline-block;
width: 94px;
height: 11px;
margin-right: 2px;
border-bottom: 1px solid #333;
vertical-align: bottom;
}

.signature {
position: absolute;
left: 86px;
top: -14px;
}

.tick {
position: absolute;
left: 66px;
top: 48px;
bottom: 0;
width: 1px;
background: #999;
}

/* status bar */
.statusbar {
display: flex;
align-items: center;
height: 21px;
padding-left: 11px;
background: #f1f1f1;
border-top: 1px solid #c6c6c6;
color: #444;
}

.st-words { margin-left: 24px; }
.st-book { margin-left: 27px; }
.st-lang { margin-left: 18px; }
.st-acc { margin-left: 18px; }

.st-acc-text {
margin-left: 2px;
font-weight: 500;
}

.st-right {
display: flex;
align-items: center;
height: 20px;
margin-left: auto;
padding-right: 25px;
}

.view-on {
display: flex;
align-items: center;
justify-content: center;
width: 40px;
height: 20px;
margin-left: 13px;
background: #c6c6c6;
}

.view-web { margin-left: 14px; }

.zoom-minus {
width: 8px;
height: 1px;
margin-left: 17px;
background: #444;
}

.slider {
position: relative;
width: 100px;
height: 1px;
margin-left: 6px;
background: #444;
}

.thumb {
position: absolute;
left: 35px;
top: -5px;
width: 5px;
height: 11px;
background: #444;
}

.mid {
position: absolute;
left: 50px;
top: -2px;
width: 1px;
height: 5px;
background: #444;
}

.zoom-plus { margin-left: 5px; }

.st-zoom {
margin-left: 10px;
font-size: 13px;
}
```
